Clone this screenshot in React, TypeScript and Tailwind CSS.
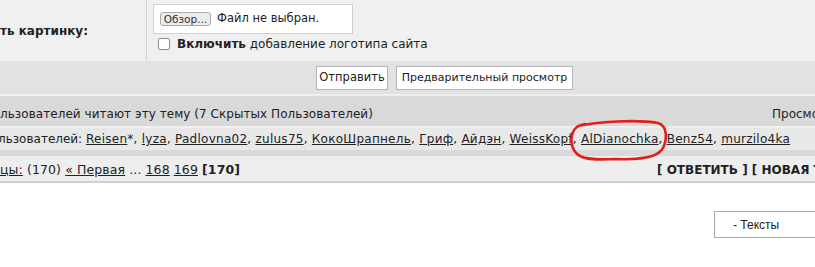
import React from "react";

const users = [
  "Reisen",
  "lyza",
  "Padlovna02",
  "zulus75",
  "КокоШрапнель",
  "Гриф",
  "Айдэн",
  "WeissKopf",
  "AlDianochka",
  "Benz54",
  "murzilo4ka",
];

const UserList = () => (
  <span className="-ml-[2px]">
    льзователей:{" "}
    <span className="tracking-[0.26px]">
      {users.map((u, i) => (
        <span key={u}>
          <a className="underline text-[#222]">{u}</a>
          {u === "Reisen" ? "*" : ""}
          {i < users.length - 1 ? ", " : ""}
        </span>
      ))}
    </span>
  </span>
);

const Scribble = () => (
  <svg
    className="absolute left-[566px] top-[118px] pointer-events-none"
    width="106"
    height="48"
    viewBox="0 0 106 48"
    fill="none"
  >
    <path
      d="M12 8 C 30 4, 70 1, 92 5 C 102 8, 101 22, 97 30 C 92 40, 70 42, 50 41 C 38 41, 24 43, 14 38 C 5 33, 4 22, 7 14 C 9 9, 13 7, 19 6"
      stroke="#e0201c"
      strokeWidth="2.6"
      strokeLinecap="round"
    />
  </svg>
);

export default function App() {
  return (
    <div className="relative w-[815px] h-[267px] overflow-hidden bg-white text-[12px] text-[#222] font-['DejaVu_Sans',sans-serif]">
      {/* attachment row */}
      <div className="flex h-[61px] bg-[#f0f0f0]">
        <div className="w-[147px] border-r border-[#d2d2d2] flex items-center font-bold">
          ть картинку:
        </div>
        <div className="flex flex-col pl-[6px] pt-[4px]">
          <div className="w-[200px] h-[30px] bg-white border border-[#d0d0d0] flex items-center pl-[6px] gap-[6px]">
            <button className="h-[14px] w-[51px] text-[10.5px] leading-none border border-[#a9a9a9] rounded-[3px] bg-[#ececec] text-[#333]">
              Обзор...
            </button>
            <span className="text-[11.5px]">Файл не выбран.</span>
          </div>
          <label className="flex items-center gap-[7px] mt-[1px] pl-[5px] text-[12px]">
            <span className="w-[12px] h-[12px] border border-[#8d8d8d] rounded-[2px] bg-white" />
            <span>
              <b>Включить</b> добавление логотипа сайта
            </span>
          </label>
        </div>
      </div>

      {/* submit buttons */}
      <div className="flex items-center gap-[8px] h-[33px] bg-[#e2e2e2] pl-[316px] pt-[1px]">
        <button className="h-[24px] w-[72px] bg-white border border-[#b5b5b5] text-[11.5px]">
          Отправить
        </button>
        <button className="h-[24px] w-[177px] bg-white border border-[#b5b5b5] text-[11px]">
          Предварительный просмотр
        </button>
      </div>
      <div className="h-[2px] bg-[#f0f0f0]" />

      {/* readers */}
      <div className="flex items-center justify-between h-[30px] bg-[#d9d9d9] pt-[6px]">
        <span className="tracking-[0.05px]">льзователей читают эту тему (7 Скрытых Пользователей)</span>
        <span className="w-[43px] overflow-hidden whitespace-nowrap">Просмотр</span>
      </div>
      <div className="h-[2px] bg-[#f0f0f0]" />
      <div className="flex items-center h-[22px] bg-[#e8e8e8] whitespace-nowrap">
        <UserList />
      </div>
      <div className="h-[6px] bg-[#d9d9d9]" />

      {/* pagination */}
      <div className="flex items-center justify-between h-[27px] bg-[#eeeeee] border-b-2 border-[#cfcfcf] whitespace-nowrap pt-[3px]">
        <span className="text-[12.5px] tracking-[0.1px]">
          <a className="underline">цы:</a> (170) <a className="underline">« Первая</a> ...{" "}
          <a className="underline">168</a> <a className="underline">169</a> <b>[170]</b>
        </span>
        <span className="w-[158px] overflow-hidden font-bold">[ ОТВЕТИТЬ ] [ НОВАЯ ТЕМА ]</span>
      </div>

      {/* category select */}
      <div className="flex justify-end pt-[28px]">
        <div className="w-[101px] h-[27px] border border-r-0 border-[#a8a8a8] flex items-center pl-[18px] text-[12px] font-['Liberation_Sans_Narrow','Liberation_Sans',sans-serif]">
          - Тексты
        </div>
      </div>

      <Scribble />
    </div>
  );
}
